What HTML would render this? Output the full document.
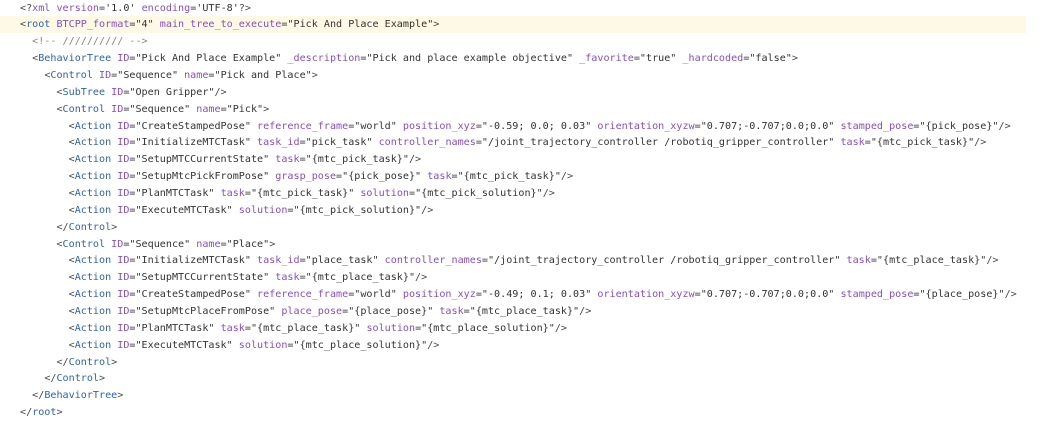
<!DOCTYPE html>
<html><head><meta charset="utf-8"><style>
html,body{margin:0;padding:0;background:#fff;width:1051px;height:419px;overflow:hidden}
pre{margin:0;position:absolute;left:20px;top:0.5px;font-family:"DejaVu Sans Mono","Liberation Mono",monospace;font-size:10.11px;line-height:16.86px;color:#333}
.hl{position:absolute;left:0;top:15.5px;width:1026px;height:17px;background:#fdf9e4}
.t{color:#2f63ae}.a{color:#874fc0}.v{color:#333}.p{color:#4a4a4a}.c{color:#888}
</style></head><body>
<div class="hl"></div>
<pre><span class="p">&lt;?</span><span class="a">xml</span> <span class="a">version</span>=<span class="v">'1.0'</span> <span class="a">encoding</span>=<span class="v">'UTF-8'</span><span class="p">?&gt;</span>
<span class="p">&lt;</span><span class="t">root</span> <span class="a">BTCPP_format</span>=<span class="v">"4"</span> <span class="a">main_tree_to_execute</span>=<span class="v">"Pick And Place Example"</span><span class="p">&gt;</span>
  <span class="c">&lt;!-- ////////// --&gt;</span>
  <span class="p">&lt;</span><span class="t">BehaviorTree</span> <span class="a">ID</span>=<span class="v">"Pick And Place Example"</span> <span class="a">_description</span>=<span class="v">"Pick and place example objective"</span> <span class="a">_favorite</span>=<span class="v">"true"</span> <span class="a">_hardcoded</span>=<span class="v">"false"</span><span class="p">&gt;</span>
    <span class="p">&lt;</span><span class="t">Control</span> <span class="a">ID</span>=<span class="v">"Sequence"</span> <span class="a">name</span>=<span class="v">"Pick and Place"</span><span class="p">&gt;</span>
      <span class="p">&lt;</span><span class="t">SubTree</span> <span class="a">ID</span>=<span class="v">"Open Gripper"</span><span class="p">/&gt;</span>
      <span class="p">&lt;</span><span class="t">Control</span> <span class="a">ID</span>=<span class="v">"Sequence"</span> <span class="a">name</span>=<span class="v">"Pick"</span><span class="p">&gt;</span>
        <span class="p">&lt;</span><span class="t">Action</span> <span class="a">ID</span>=<span class="v">"CreateStampedPose"</span> <span class="a">reference_frame</span>=<span class="v">"world"</span> <span class="a">position_xyz</span>=<span class="v">"-0.59; 0.0; 0.03"</span> <span class="a">orientation_xyzw</span>=<span class="v">"0.707;-0.707;0.0;0.0"</span> <span class="a">stamped_pose</span>=<span class="v">"{pick_pose}"</span><span class="p">/&gt;</span>
        <span class="p">&lt;</span><span class="t">Action</span> <span class="a">ID</span>=<span class="v">"InitializeMTCTask"</span> <span class="a">task_id</span>=<span class="v">"pick_task"</span> <span class="a">controller_names</span>=<span class="v">"/joint_trajectory_controller /robotiq_gripper_controller"</span> <span class="a">task</span>=<span class="v">"{mtc_pick_task}"</span><span class="p">/&gt;</span>
        <span class="p">&lt;</span><span class="t">Action</span> <span class="a">ID</span>=<span class="v">"SetupMTCCurrentState"</span> <span class="a">task</span>=<span class="v">"{mtc_pick_task}"</span><span class="p">/&gt;</span>
        <span class="p">&lt;</span><span class="t">Action</span> <span class="a">ID</span>=<span class="v">"SetupMtcPickFromPose"</span> <span class="a">grasp_pose</span>=<span class="v">"{pick_pose}"</span> <span class="a">task</span>=<span class="v">"{mtc_pick_task}"</span><span class="p">/&gt;</span>
        <span class="p">&lt;</span><span class="t">Action</span> <span class="a">ID</span>=<span class="v">"PlanMTCTask"</span> <span class="a">task</span>=<span class="v">"{mtc_pick_task}"</span> <span class="a">solution</span>=<span class="v">"{mtc_pick_solution}"</span><span class="p">/&gt;</span>
        <span class="p">&lt;</span><span class="t">Action</span> <span class="a">ID</span>=<span class="v">"ExecuteMTCTask"</span> <span class="a">solution</span>=<span class="v">"{mtc_pick_solution}"</span><span class="p">/&gt;</span>
      <span class="p">&lt;/</span><span class="t">Control</span><span class="p">&gt;</span>
      <span class="p">&lt;</span><span class="t">Control</span> <span class="a">ID</span>=<span class="v">"Sequence"</span> <span class="a">name</span>=<span class="v">"Place"</span><span class="p">&gt;</span>
        <span class="p">&lt;</span><span class="t">Action</span> <span class="a">ID</span>=<span class="v">"InitializeMTCTask"</span> <span class="a">task_id</span>=<span class="v">"place_task"</span> <span class="a">controller_names</span>=<span class="v">"/joint_trajectory_controller /robotiq_gripper_controller"</span> <span class="a">task</span>=<span class="v">"{mtc_place_task}"</span><span class="p">/&gt;</span>
        <span class="p">&lt;</span><span class="t">Action</span> <span class="a">ID</span>=<span class="v">"SetupMTCCurrentState"</span> <span class="a">task</span>=<span class="v">"{mtc_place_task}"</span><span class="p">/&gt;</span>
        <span class="p">&lt;</span><span class="t">Action</span> <span class="a">ID</span>=<span class="v">"CreateStampedPose"</span> <span class="a">reference_frame</span>=<span class="v">"world"</span> <span class="a">position_xyz</span>=<span class="v">"-0.49; 0.1; 0.03"</span> <span class="a">orientation_xyzw</span>=<span class="v">"0.707;-0.707;0.0;0.0"</span> <span class="a">stamped_pose</span>=<span class="v">"{place_pose}"</span><span class="p">/&gt;</span>
        <span class="p">&lt;</span><span class="t">Action</span> <span class="a">ID</span>=<span class="v">"SetupMtcPlaceFromPose"</span> <span class="a">place_pose</span>=<span class="v">"{place_pose}"</span> <span class="a">task</span>=<span class="v">"{mtc_place_task}"</span><span class="p">/&gt;</span>
        <span class="p">&lt;</span><span class="t">Action</span> <span class="a">ID</span>=<span class="v">"PlanMTCTask"</span> <span class="a">task</span>=<span class="v">"{mtc_place_task}"</span> <span class="a">solution</span>=<span class="v">"{mtc_place_solution}"</span><span class="p">/&gt;</span>
        <span class="p">&lt;</span><span class="t">Action</span> <span class="a">ID</span>=<span class="v">"ExecuteMTCTask"</span> <span class="a">solution</span>=<span class="v">"{mtc_place_solution}"</span><span class="p">/&gt;</span>
      <span class="p">&lt;/</span><span class="t">Control</span><span class="p">&gt;</span>
    <span class="p">&lt;/</span><span class="t">Control</span><span class="p">&gt;</span>
  <span class="p">&lt;/</span><span class="t">BehaviorTree</span><span class="p">&gt;</span>
<span class="p">&lt;/</span><span class="t">root</span><span class="p">&gt;</span></pre>
</body></html>
